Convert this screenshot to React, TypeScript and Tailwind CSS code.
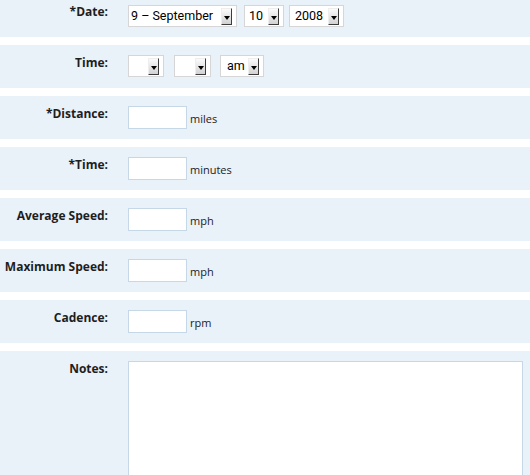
import React from "react";

const rowBg = "bg-[#e9f1f9]";

function Arrow() {
  return (
    <div className="ml-auto mr-[4px] w-[11px] h-[17px] flex items-center justify-center bg-gradient-to-b from-[#fbfbfb] to-[#d2d2d2] border-t border-l border-[#eeeeee] border-r-[#3c3c3c] border-b-[#3c3c3c] border-r border-b">
      <div className="w-0 h-0 mt-[3px] border-l-[3px] border-r-[3px] border-t-[4px] border-l-transparent border-r-transparent border-t-black" />
    </div>
  );
}

function Select({ w, text, pl, ml }: { w: string; text?: string; pl: string; ml: string }) {
  return (
    <div className={`${w} ${ml} h-[22px] bg-white border border-[#d6d6d6] flex items-center ${pl} font-['Roboto',sans-serif] text-[12.5px] text-black`}>
      {text ? <span className="leading-[14px]">{text}</span> : null}
      <Arrow />
    </div>
  );
}

function Label({ children, pt }: { children: React.ReactNode; pt: string }) {
  return (
    <div className={`w-[108px] shrink-0 text-right font-bold text-[12px] leading-[17px] text-[#1e1e1e] whitespace-nowrap ${pt}`}>
      {children}
    </div>
  );
}

function InputRow({ label, unit }: { label: string; unit: string }) {
  return (
    <div className={`${rowBg} h-[43px] flex items-start`}>
      <Label pt="pt-[9px]">{label}</Label>
      <div className="ml-[20px] mt-[10px] flex">
        <div className="w-[59px] h-[23px] bg-white border border-[#c6d7e8]" />
        <span className="self-end ml-[3px] mb-[3px] text-[11px] leading-[15px] text-[#222]">{unit}</span>
      </div>
    </div>
  );
}

export default function App() {
  return (
    <div className="w-[530px] bg-white flex flex-col gap-[8px] font-['Open_Sans',sans-serif] overflow-hidden">
      <div className={`${rowBg} h-[37px] flex items-start`}>
        <Label pt="pt-[3px]">*Date:</Label>
        <div className="ml-[20px] mt-[5px] flex">
          <Select w="w-[109px]" text="9 – September" pl="pl-[2px]" ml="" />
          <Select w="w-[40px]" text="10" pl="pl-[4px]" ml="ml-[7px]" />
          <Select w="w-[55px]" text="2008" pl="pl-[5px]" ml="ml-[5px]" />
        </div>
      </div>
      <div className={`${rowBg} h-[43px] flex items-start`}>
        <Label pt="pt-[9px]">Time:</Label>
        <div className="ml-[20px] mt-[10px] flex">
          <Select w="w-[36px]" pl="pl-[2px]" ml="" />
          <Select w="w-[37px]" pl="pl-[2px]" ml="ml-[10px]" />
          <Select w="w-[44px]" text="am" pl="pl-[6px]" ml="ml-[9px]" />
        </div>
      </div>
      <InputRow label="*Distance:" unit="miles" />
      <InputRow label="*Time:" unit="minutes" />
      <InputRow label="Average Speed:" unit="mph" />
      <InputRow label="Maximum Speed:" unit="mph" />
      <InputRow label="Cadence:" unit="rpm" />
      <div className={`${rowBg} flex items-start pb-[10px]`}>
        <Label pt="pt-[9px]">Notes:</Label>
        <div className="ml-[20px] mt-[10px] flex">
          <textarea className="w-[395px] h-[130px] bg-white border border-[#c6d7e8] resize-none outline-none" />
        </div>
      </div>
    </div>
  );
}
